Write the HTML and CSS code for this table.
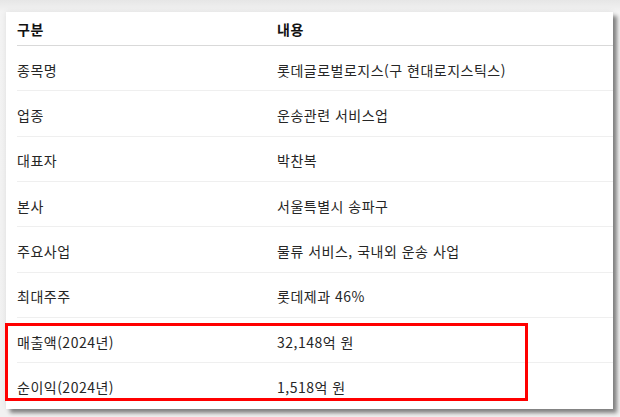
FILE: index.html
```html
<!DOCTYPE html>
<html lang="ko">
<head>
<meta charset="utf-8">
<link rel="stylesheet" href="styles.css">
</head>
<body>
<div class="card">
  <div class="table">
    <div class="row head"><div class="c1">구분</div><div class="c2">내용</div></div>
    <div class="row"><div class="c1">종목명</div><div class="c2">롯데글로벌로지스(구 현대로지스틱스)</div></div>
    <div class="row"><div class="c1">업종</div><div class="c2">운송관련 서비스업</div></div>
    <div class="row"><div class="c1">대표자</div><div class="c2">박찬복</div></div>
    <div class="row"><div class="c1">본사</div><div class="c2">서울특별시 송파구</div></div>
    <div class="row"><div class="c1">주요사업</div><div class="c2">물류 서비스, 국내외 운송 사업</div></div>
    <div class="row"><div class="c1">최대주주</div><div class="c2">롯데제과 46%</div></div>
    <div class="row"><div class="c1">매출액(2024년)</div><div class="c2">32,148억 원</div></div>
    <div class="row last"><div class="c1">순이익(2024년)</div><div class="c2">1,518억 원</div></div>
  </div>
  <div class="highlight"></div>
</div>
</body>
</html>
```

FILE: styles.css
```css
html, body {
  margin: 0;
  padding: 0;
}
body {
  width: 620px;
  height: 417px;
  overflow: hidden;
  background: linear-gradient(#e6e6e6, #f3f3f3 12px, #f1f1f1);
  padding: 12px 0 0 6px;
  box-sizing: border-box;
  font-family: "Noto Sans CJK KR", "Noto Sans", sans-serif;
}
.card {
  position: relative;
  width: 607px;
  height: 397px;
  background: #fff;
  box-shadow: 4px 4px 4px rgba(0, 0, 0, 0.45), 0 0 6px rgba(0, 0, 0, 0.08);
  padding-left: 11px;
  box-sizing: border-box;
}
.table {
  display: flex;
  flex-direction: column;
}
.row {
  display: flex;
  align-items: center;
  height: 45.33px;
  box-sizing: border-box;
  border-bottom: 1px solid #efefef;
  font-size: 14px;
  letter-spacing: 0.5px;
  color: #262626;
  padding-top: 3px;
}
.row.head {
  height: 34px;
  border-bottom: 1px solid #d9d9d9;
  font-weight: bold;
  color: #111;
  padding-top: 0;
}
.row.last {
  border-bottom: none;
}
.c1 {
  width: 260px;
  flex: none;
}
.c2 {
  flex: 1;
}
.highlight {
  position: absolute;
  left: -1px;
  top: 311px;
  width: 523px;
  height: 78px;
  border: 3px solid #f00;
  box-sizing: border-box;
}
```
